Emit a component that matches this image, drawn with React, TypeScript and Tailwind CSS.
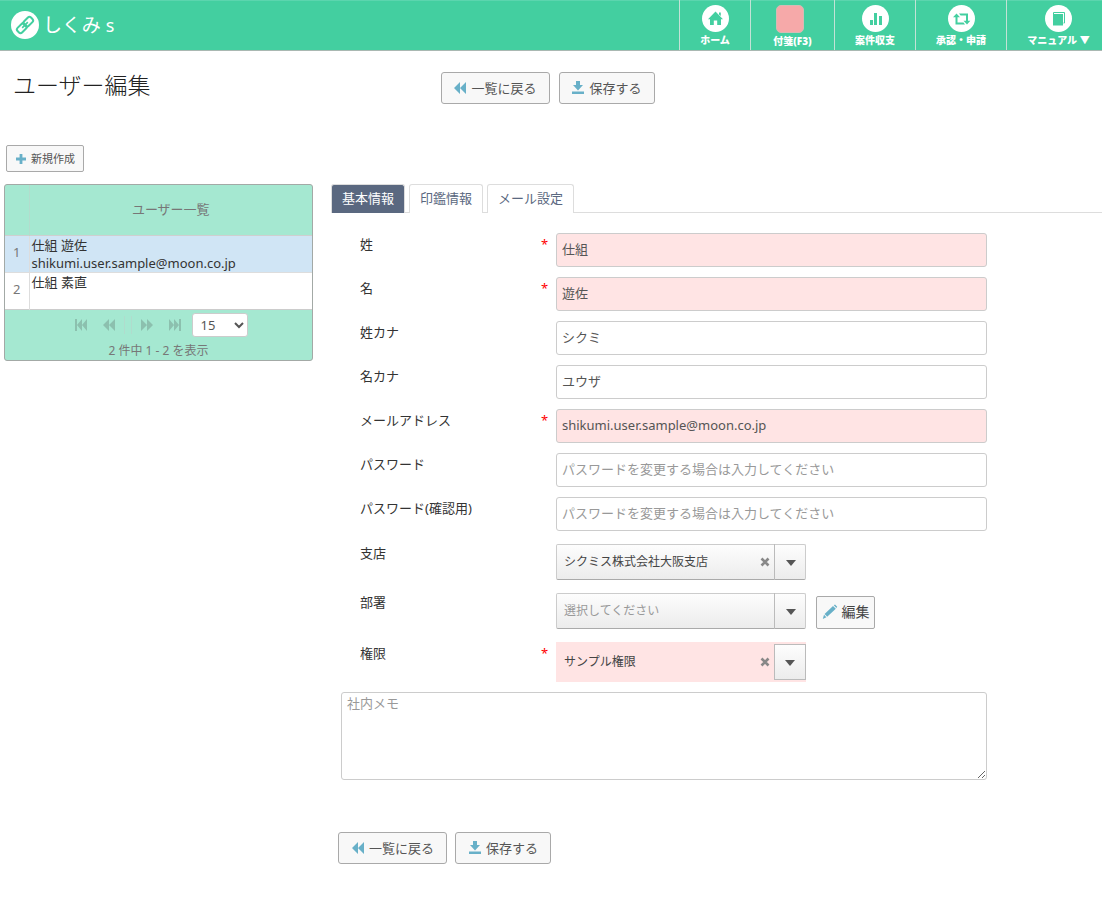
import React from 'react';
import clsx from 'clsx';

interface IconProps {
  className?: string;
}

const LogoIcon = () => (
  <svg viewBox="0 0 28 28" className="w-7 h-7 shrink-0" aria-hidden="true">
    <circle cx="14" cy="14" r="14" fill="#fff" />
    <g transform="rotate(-45 14 14)" fill="none" stroke="#43cfa0" strokeWidth="2">
      <rect x="4.5" y="10.8" width="10" height="6.4" rx="2.2" />
      <rect x="13.5" y="10.8" width="10" height="6.4" rx="2.2" />
      <path d="M10 14h8" strokeWidth="1.6" />
    </g>
  </svg>
);

const HomeIcon = () => (
  <svg viewBox="0 0 27 27" className="w-[27px] h-[27px]" aria-hidden="true">
    <circle cx="13.5" cy="13.5" r="13.5" fill="#fff" />
    <path d="M13.5 6.5 21 14.2h-2V20h-3.8v-4.6h-3.4V20H8v-5.8H6L13.5 6.5zM17 7.5h1.8v3.5L17 9.5z" fill="#43cfa0" />
  </svg>
);

const ChartIcon = () => (
  <svg viewBox="0 0 27 27" className="w-[27px] h-[27px]" aria-hidden="true">
    <circle cx="13.5" cy="13.5" r="13.5" fill="#fff" />
    <path d="M8 15h3v5H8zM12 8h3v12h-3zM17 11h3v9h-3z" fill="#43cfa0" />
  </svg>
);

const RetweetIcon = () => (
  <svg viewBox="0 0 27 27" className="w-[27px] h-[27px]" aria-hidden="true">
    <circle cx="13.5" cy="13.5" r="13.5" fill="#fff" />
    <path
      d="M8.5 8.5 12 12.3H9.5V17.5h6l1.5 2H7.5v-7.2H5L8.5 8.5zM11 8.5h9v7.2h2.3L19 19.5 15.5 15.7H18v-5.2h-5.4L11 8.5z"
      fill="#43cfa0"
    />
  </svg>
);

const BookIcon = () => (
  <svg viewBox="0 0 27 27" className="w-[27px] h-[27px]" aria-hidden="true">
    <circle cx="13.5" cy="13.5" r="13.5" fill="#fff" />
    <path d="M8 9h10v11.5H8z" fill="#43cfa0" />
    <path d="M8.5 9V7.5h11V18h-1" fill="none" stroke="#43cfa0" strokeWidth="1" />
  </svg>
);

const BackwardIcon = ({ className }: IconProps) => (
  <svg viewBox="0 0 14 12" className={clsx('w-[14px] h-3 shrink-0', className)} fill="currentColor" aria-hidden="true">
    <path d="M7 0v12L1 6zM13 0v12L7 6z" />
  </svg>
);

const FirstIcon = ({ className }: IconProps) => (
  <svg viewBox="0 0 14 12" className={clsx('w-[14px] h-3 shrink-0', className)} fill="currentColor" aria-hidden="true">
    <path d="M1 0h2v12H1zM8 0v12L3 6zM13 0v12L8 6z" />
  </svg>
);

const SaveIcon = () => (
  <svg viewBox="0 0 14 14" className="w-[14px] h-[14px] shrink-0" fill="currentColor" aria-hidden="true">
    <path d="M5 0h4v4h3L7 9.5 2 4h3zM1 10.5h12V13H1z" />
  </svg>
);

const PlusIcon = () => (
  <svg viewBox="0 0 12 12" className="w-3 h-3 shrink-0" fill="currentColor" aria-hidden="true">
    <path d="M4.6 1h2.8v3.6H11v2.8H7.4V11H4.6V7.4H1V4.6h3.6z" />
  </svg>
);

const PencilIcon = () => (
  <svg viewBox="0 0 16 16" className="w-4 h-4 shrink-0" fill="currentColor" aria-hidden="true">
    <path d="M11.8 1.2 13 .6l2.2 2.2-.8 1.2zM11 2l2.8 2.8-8.6 8L2.6 10zM2 10.8l2.4 2.4L.8 15z" />
  </svg>
);

const ActionButtons = ({ className }: IconProps) => (
  <div className={clsx('flex', className)}>
    <button type="button" className="flex items-center justify-center gap-1 w-[109px] h-8 pb-px rounded-[3px] border border-[#a9a9a9] bg-[#f8f8f8]">
      <BackwardIcon className="text-[#68b0c8]" />
      一覧に戻る
    </button>
    <button type="button" className="flex items-center justify-center gap-1 w-24 h-8 pb-px rounded-[3px] border border-[#a9a9a9] bg-[#f8f8f8]">
      <span className="text-[#68b0c8]">
        <SaveIcon />
      </span>
      保存する
    </button>
  </div>
);

const navItems = [
  { label: 'ホーム', icon: <HomeIcon />, width: 'w-[71px]' },
  {
    label: '付箋(F3)',
    icon: <span className="w-7 h-7 mr-1.5 rounded-[5px] border border-[#d3bcb5] bg-[#f6a9a9]" />,
    width: 'w-[84px]',
  },
  { label: '案件収支', icon: <ChartIcon />, width: 'w-[81px]' },
  { label: '承認・申請', icon: <RetweetIcon />, width: 'w-[91px]' },
  { label: 'マニュアル ▼', icon: <BookIcon />, width: 'w-24 pl-2' },
];

const Header = () => (
  <header className="flex justify-between h-[51px] border-b border-[#a9b8b2] bg-[#43cfa0] text-white shadow-[inset_0_1px_0_#5bd5ae]">
    <a href="#" className="flex items-center gap-1 pl-[11px]">
      <LogoIcon />
      <span className="text-[19px] leading-7">
        しくみ <span className="text-lg">s</span>
      </span>
    </a>
    <nav className="flex">
      {navItems.map((item) => (
        <a
          key={item.label}
          href="#"
          className={clsx('flex flex-col items-center pt-[5px] border-l border-[#c3e2d6] text-[10px] leading-4 font-black whitespace-nowrap', item.width)}
        >
          {item.icon}
          {item.label}
        </a>
      ))}
    </nav>
  </header>
);

const UserList = () => (
  <div className="rounded-[3px] border border-[#a3a9a6] bg-[#a5e8d1] overflow-hidden">
    <table className="w-full border-collapse">
      <thead>
        <tr className="h-[50px] border-b border-[#cfcfcf] text-[#777]">
          <th className="w-6" />
          <th className="border-l border-[#b3dccd] pb-0.5 font-normal">ユーザー一覧</th>
        </tr>
      </thead>
      <tbody className="leading-[18px] text-[#333]">
        <tr className="h-[37px] bg-[#d0e5f5] border-b border-[#ddd]">
          <td className="pb-1 text-center text-[#777]">1</td>
          <td className="border-l border-[#ddd] pl-0.5 align-top">
            仕組 遊佐
            <br />
            shikumi.user.sample@moon.co.jp
          </td>
        </tr>
        <tr className="h-[37px] bg-white border-b border-[#ccc]">
          <td className="pb-1 text-center text-[#777]">2</td>
          <td className="border-l border-[#ddd] pl-0.5 align-top">仕組 素直</td>
        </tr>
      </tbody>
    </table>
    <div className="flex items-center justify-center gap-[14px] h-[31px] pl-1 text-[#8cc0ae]">
      <button type="button" aria-label="最初のページ">
        <FirstIcon />
      </button>
      <button type="button" aria-label="前のページ">
        <BackwardIcon />
      </button>
      <span className="w-2 h-[18px] -mx-1.5 border-x border-[#b0dccd]" />
      <button type="button" aria-label="次のページ">
        <BackwardIcon className="rotate-180" />
      </button>
      <button type="button" aria-label="最後のページ">
        <FirstIcon className="rotate-180" />
      </button>
      <select
        aria-label="表示件数"
        defaultValue="15"
        className="w-14 h-6 -ml-1 pl-1 rounded-[3px] border border-[#ccc] bg-white text-[#555]"
      >
        <option>15</option>
        <option>30</option>
      </select>
    </div>
    <p className="h-[19px] text-center text-xs leading-5 text-[#777]">2 件中 1 - 2 を表示</p>
  </div>
);

interface RowProps {
  id: string;
  label: string;
  required?: boolean;
  className?: string;
  children: React.ReactNode;
}

const FormRow = ({ id, label, required, className = 'leading-[22px]', children }: RowProps) => (
  <div className={clsx('flex items-start', className)}>
    <label htmlFor={id} className="w-[200px] pl-[19px] text-[#333]">
      {label}
    </label>
    <span className="w-[15px] text-[#f00]">{required && '*'}</span>
    {children}
  </div>
);

const fields = [
  { id: 'sei', label: '姓', required: true, value: '仕組' },
  { id: 'mei', label: '名', required: true, value: '遊佐' },
  { id: 'sei-kana', label: '姓カナ', value: 'シクミ' },
  { id: 'mei-kana', label: '名カナ', value: 'ユウザ' },
  { id: 'email', label: 'メールアドレス', required: true, value: 'shikumi.user.sample@moon.co.jp' },
  { id: 'password', label: 'パスワード', type: 'password', placeholder: 'パスワードを変更する場合は入力してください' },
  { id: 'password2', label: 'パスワード(確認用)', type: 'password', placeholder: 'パスワードを変更する場合は入力してください' },
];

interface ComboProps {
  id: string;
  value?: string;
  required?: boolean;
}

const Combo = ({ id, value, required }: ComboProps) => (
  <div className={clsx('relative w-[250px]', required && 'py-0.5 bg-[#ffe4e4]')}>
    <select
      id={id}
      className={clsx(
        'block appearance-none w-full h-9 pl-[7px] pr-12 border text-xs rounded-[2px]',
        required ? 'border-transparent' : 'border-[#ccc] border-b-[#aaa] bg-linear-to-b from-[#fdfdfd] to-[#ececec]',
        value ? 'text-[#444]' : 'text-[#999]',
      )}
    >
      <option>{value || '選択してください'}</option>
    </select>
    <div className="absolute inset-y-0 right-0 flex items-center pointer-events-none">
      {value && (
        <button type="button" aria-label="クリア" className="mr-1 pointer-events-auto text-[#888]">
          <svg viewBox="0 0 10 10" className="w-[10px] h-[10px]" stroke="currentColor" strokeWidth="2.6" aria-hidden="true">
            <path d="M1.5 1.5l7 7M8.5 1.5l-7 7" />
          </svg>
        </button>
      )}
      <span
        className={clsx(
          'flex items-center justify-center w-8 h-9 pt-0.5',
          required ? 'border border-[#bbb] bg-linear-to-b from-[#fdfdfd] to-[#ececec]' : 'border-l border-[#bbb]',
        )}
      >
        <svg viewBox="0 0 10 6" className="w-[10px] h-1.5" fill="#555" aria-hidden="true">
          <path d="M0 0h10L5 6z" />
        </svg>
      </span>
    </div>
  </div>
);

const tabs = ['基本情報', '印鑑情報', 'メール設定'];

const UserForm = () => (
  <form className="flex-1 min-w-0" onSubmit={(e) => e.preventDefault()}>
    <div role="tablist" className="flex gap-1 h-[29px] border-b border-[#ddd]">
      {tabs.map((tab, i) => (
        <button
          key={tab}
          type="button"
          role="tab"
          aria-selected={i === 0}
          className={clsx(
            'h-[29px] px-[10px] pb-0.5 rounded-t-[3px] border border-b-0 border-[#ddd]',
            i === 0 ? 'bg-[#5a6880] text-white' : 'bg-white text-[#5a6880]',
          )}
        >
          {tab}
        </button>
      ))}
    </div>
    <div className="flex flex-col gap-[10px] pt-5 pl-[10px] pr-[115px]">
      {fields.map((field) => (
        <FormRow key={field.id} id={field.id} label={field.label} required={field.required}>
          <input
            id={field.id}
            type={field.type || 'text'}
            defaultValue={field.value}
            placeholder={field.placeholder}
            className={clsx(
              'flex-1 min-w-0 h-[34px] px-[5px] pb-[3px] rounded-[3px] border border-[#ccc] text-[#555] placeholder:text-[#999]',
              field.required ? 'bg-[#ffe4e4]' : 'bg-white',
            )}
          />
        </FormRow>
      ))}
      <div className="flex flex-col gap-[13px] pt-[3px]">
        <FormRow id="branch" label="支店" className="leading-[18px]">
          <Combo id="branch" value="シクミス株式会社大阪支店" />
        </FormRow>
        <FormRow id="department" label="部署" className="leading-[18px]">
          <Combo id="department" />
          <button
            type="button"
            className="flex items-center justify-center gap-1 w-[59px] h-[33px] ml-[10px] mt-[3px] pb-0.5 rounded-[2px] border border-[#a9a9a9] bg-[#f8f8f8] text-sm text-[#444]"
          >
            <span className="text-[#68b0c8]">
              <PencilIcon />
            </span>
            編集
          </button>
        </FormRow>
        <FormRow id="role" label="権限" required>
          <Combo id="role" value="サンプル権限" required />
        </FormRow>
      </div>
      <textarea
        aria-label="社内メモ"
        placeholder="社内メモ"
        className="block w-full h-[88px] px-[5px] rounded-[3px] border border-[#ccc] leading-5 placeholder:text-[#999]"
      />
    </div>
    <ActionButtons className="gap-2 pl-[7px] pt-[52px]" />
  </form>
);

export default function App() {
  return (
    <div className="bg-white text-[13px] leading-5 text-[#555] font-['Noto_Sans','Noto_Sans_CJK_JP',sans-serif]">
      <Header />
      <div className="flex items-start pt-[21px]">
        <h1 className="flex-1 pl-[13px] text-[23px] leading-[26px] font-light text-[#222]">ユーザー編集</h1>
        <ActionButtons className="gap-[9px]" />
        <div className="flex-1 mr-5" />
      </div>
      <button
        type="button"
        className="flex items-center justify-center gap-1 w-[78px] h-[27px] mt-[41px] ml-1.5 rounded-[2px] border border-[#a9a9a9] bg-[#f8f8f8] text-[11px]"
      >
        <span className="text-[#68b0c8]">
          <PlusIcon />
        </span>
        新規作成
      </button>
      <main className="flex items-start gap-[18px] pt-3 pl-1">
        <section className="w-[309px] shrink-0">
          <UserList />
        </section>
        <UserForm />
      </main>
    </div>
  );
}
